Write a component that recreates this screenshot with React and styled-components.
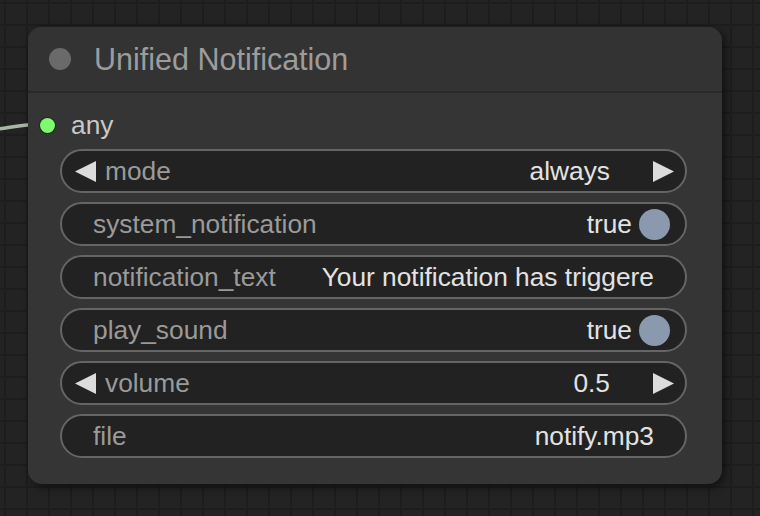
import React from "react";
import styled, { createGlobalStyle } from "styled-components";

const GlobalStyle = createGlobalStyle`
  html, body { margin: 0; padding: 0; background: #222; }
  body { font-family: "Liberation Sans", Arial, sans-serif; }
`;

const Canvas = styled.div`
  position: relative;
  width: 760px;
  height: 516px;
  overflow: hidden;
  box-sizing: border-box;
  padding: 27px 0 0 28px;
  background-color: #232323;
  background-image:
    linear-gradient(to right, #1d1d1d 2px, transparent 2px),
    linear-gradient(to bottom, #1d1d1d 2px, transparent 2px);
  background-size: 22px 22px;
  background-position: 4px 2px;
`;

const Wire = styled.svg`
  position: absolute;
  left: 0;
  top: 100px;
  width: 60px;
  height: 50px;
  z-index: 0;
`;

const Node = styled.div`
  position: relative;
  z-index: 1;
  width: 694px;
  height: 457px;
  box-sizing: border-box;
  border-radius: 14px;
  background: #353535;
  box-shadow: 3px 3px 8px rgba(0, 0, 0, 0.55);
  display: flex;
  flex-direction: column;
`;

const TitleBar = styled.div`
  height: 64px;
  display: flex;
  align-items: center;
  padding-left: 21px;
  background: #333;
  border-radius: 14px 14px 0 0;
  border-bottom: 2px solid #2a2a2a;
`;

const TitleDot = styled.span`
  width: 22px;
  height: 22px;
  border-radius: 50%;
  background: #6a6a6a;
  margin-right: 23px;
`;

const TitleText = styled.span`
  font-size: 30.5px;
  color: #9c9c9c;
`;

const Body = styled.div`
  display: flex;
  flex-direction: column;
  padding: 0 35px 25px 32px;
`;

const InputRow = styled.div`
  height: 48px;
  margin-top: 8px;
  margin-left: -20px;
  display: flex;
  align-items: center;
`;

const SlotDot = styled.span`
  width: 15px;
  height: 15px;
  border-radius: 50%;
  background: #7dfa6e;
  box-shadow: 0 0 0 1px #1d2a1a;
  margin-right: 16px;
`;

const SlotLabel = styled.span`
  font-size: 26.3px;
  color: #c8c8c8;
`;

const Widgets = styled.div`
  display: flex;
  flex-direction: column;
  gap: 9px;
`;

const Widget = styled.div`
  height: 44px;
  box-sizing: border-box;
  border: 2px solid #656565;
  border-radius: 22px;
  background: #222;
  display: flex;
  align-items: center;
  padding: 0 ${(p) => p.$pr}px 0 ${(p) => p.$pl}px;
  font-size: 26.3px;
  white-space: nowrap;
  overflow: hidden;
`;

const Label = styled.span`
  color: #9a9a9a;
  margin-left: ${(p) => p.$ml || 0}px;
`;

const Value = styled.span`
  color: #e2e2e2;
  margin-left: auto;
  margin-right: ${(p) => p.$mr || 0}px;
`;

const ArrowSvg = styled.svg`
  width: 21px;
  height: 21px;
  flex: none;
  display: block;
`;

const Toggle = styled.span`
  width: 31px;
  height: 31px;
  border-radius: 50%;
  background: #8a99ad;
  flex: none;
`;

const Arrow = ({ dir }) => (
  <ArrowSvg viewBox="0 0 21 21">
    {dir === "left" ? (
      <polygon points="21,0 21,21 0,10.5" fill="#dcdcdc" />
    ) : (
      <polygon points="0,0 0,21 21,10.5" fill="#dcdcdc" />
    )}
  </ArrowSvg>
);

const ComboWidget = ({ label, value }) => (
  <Widget $pl={13} $pr={11}>
    <Arrow dir="left" />
    <Label $ml={9}>{label}</Label>
    <Value $mr={43}>{value}</Value>
    <Arrow dir="right" />
  </Widget>
);

const ToggleWidget = ({ label, value }) => (
  <Widget $pl={31} $pr={15}>
    <Label>{label}</Label>
    <Value $mr={7}>{value}</Value>
    <Toggle />
  </Widget>
);

const TextWidget = ({ label, value }) => (
  <Widget $pl={31} $pr={31}>
    <Label>{label}</Label>
    <Value>{value}</Value>
  </Widget>
);

export default function App() {
  return (
    <>
      <GlobalStyle />
      <Canvas>
        <Wire viewBox="0 0 60 50">
          <path d="M -10 30 C 10 28, 20 24, 48 24" stroke="#a9b8a6" strokeWidth="3.5" fill="none" />
        </Wire>
        <Node>
          <TitleBar>
            <TitleDot />
            <TitleText>Unified Notification</TitleText>
          </TitleBar>
          <Body>
            <InputRow>
              <SlotDot />
              <SlotLabel>any</SlotLabel>
            </InputRow>
            <Widgets>
              <ComboWidget label="mode" value="always" />
              <ToggleWidget label="system_notification" value="true" />
              <TextWidget label="notification_text" value="Your notification has triggere" />
              <ToggleWidget label="play_sound" value="true" />
              <ComboWidget label="volume" value="0.5" />
              <TextWidget label="file" value="notify.mp3" />
            </Widgets>
          </Body>
        </Node>
      </Canvas>
    </>
  );
}
